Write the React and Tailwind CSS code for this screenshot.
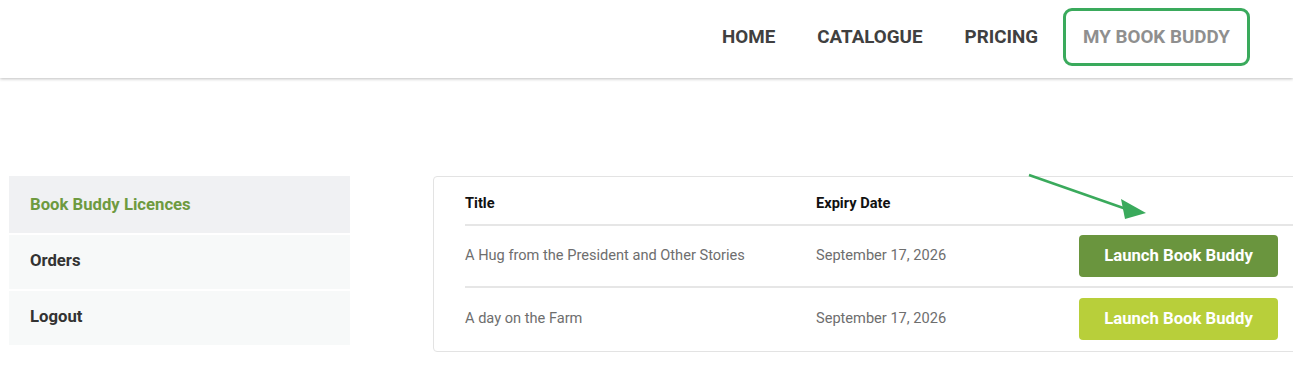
import React from 'react';

const licences = [
    { title: 'A Hug from the President and Other Stories', expiry: 'September 17, 2026', btn: 'bg-[#6a953e]' },
    { title: 'A day on the Farm', expiry: 'September 17, 2026', btn: 'bg-[#b8cf3a]' },
];

const App = () => {
    return (
        <div className="w-[1293px] h-[374px] overflow-hidden bg-white font-['Roboto',sans-serif]">
            <header className="h-[78px] bg-white shadow-[0_1px_3px_rgba(0,0,0,0.25)] flex items-center justify-end pr-[43px] pb-[4px] relative z-10">
                <nav className="flex items-center text-[18.8px] font-bold uppercase">
                    <a className="text-[#404040] mr-[42px]">Home</a>
                    <a className="text-[#404040] mr-[42px]">Catalogue</a>
                    <a className="text-[#404040] mr-[25px]">Pricing</a>
                    <a className="text-[#8f8f8f] h-[58px] px-[17px] flex items-center border-[3px] border-[#3aaa5c] rounded-[9px]">My Book Buddy</a>
                </nav>
            </header>

            <main className="flex items-start pt-[98px] pl-[9px]">
                <aside className="w-[341px] shrink-0 flex flex-col gap-[2px] text-[16.7px] font-bold">
                    <div className="h-[57px] bg-[#f0f1f3] flex items-center pl-[21px] text-[#6e9a3f]">Book Buddy Licences</div>
                    <div className="h-[54px] bg-[#f7f9f9] flex items-center pl-[21px] pb-[3px] text-[#333333]">Orders</div>
                    <div className="h-[54px] bg-[#f7f9f9] flex items-center pl-[21px] pb-[2px] text-[#333333]">Logout</div>
                </aside>

                <section className="relative shrink-0 ml-[83px] w-[870px] border border-[#e3e3e3] rounded-[4px] pl-[31px] pb-[1px]">
                    <svg className="absolute left-[590px] top-[-4px]" width="130" height="50" viewBox="0 0 130 50">
                        <line x1="5" y1="2" x2="105" y2="37" stroke="#3aaa5c" strokeWidth="2.5" />
                        <polygon points="97,26 122,40 101,46" fill="#3aaa5c" />
                    </svg>
                    <div className="flex items-center h-[49px] border-b-2 border-[#e6e6e6] text-[14.6px] font-bold text-[#111]">
                        <div className="w-[351px] pt-[6px]">Title</div>
                        <div className="flex-1 pt-[6px]">Expiry Date</div>
                    </div>
                    {licences.map((l, i) => (
                        <div key={i} className={`flex items-center h-[62px] pr-[24px] text-[14.6px] text-[#6e6e6e] ${i === 0 ? 'border-b-2 border-[#e6e6e6]' : ''}`}>
                            <div className="w-[351px]">{l.title}</div>
                            <div className="flex-1">{l.expiry}</div>
                            <button className={`${l.btn} w-[199px] h-[42px] rounded-[4px] text-white text-[16.7px] font-bold`}>Launch Book Buddy</button>
                        </div>
                    ))}
                </section>
            </main>
        </div>
    );
};

export default App;
